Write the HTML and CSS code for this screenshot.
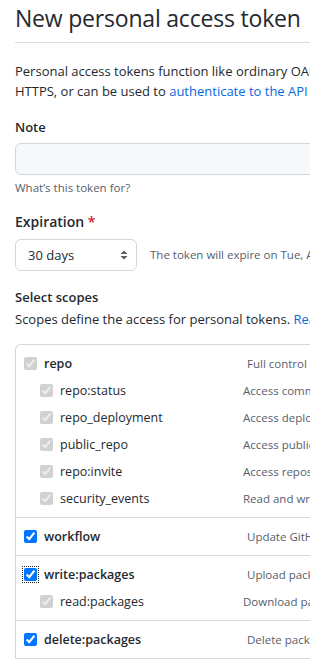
FILE: index.html
```html
<!DOCTYPE html>
<html lang="en">
<head>
  <meta charset="UTF-8" />
  <meta name="viewport" content="width=device-width, initial-scale=1.0" />
  <title>New personal access token</title>
  <link rel="stylesheet" href="styles.css">
</head>
<body>
  <div class="page">
    <h2 class="subhead">New personal access token</h2>

    <p class="intro">
      Personal access tokens function like ordinary OAuth access tokens. They can be used instead of a password for Git over<br>
      HTTPS, or can be used to <a href="#">authenticate to the API over Basic Authentication</a>.
    </p>

    <!-- Note -->
    <div class="form-group">
      <label class="form-label" for="note">Note</label>
      <input class="form-control" type="text" id="note">
      <div class="hint">What’s this token for?</div>
    </div>

    <!-- Expiration -->
    <div class="form-group">
      <label class="form-label form-label-lg" for="expiry">Expiration <span class="required">*</span></label>
      <div class="expiry-row">
        <div class="select-wrap">
          <select class="select" id="expiry">
            <option>30 days</option>
            <option>60 days</option>
            <option>90 days</option>
            <option>Custom...</option>
          </select>
          <svg class="select-arrow" width="8" height="10" viewBox="0 0 8 10">
            <path d="M4 0.5 L7.5 4 H0.5 Z M4 9.5 L7.5 6 H0.5 Z" fill="#57606a"/>
          </svg>
        </div>
        <span class="expiry-note">The token will expire on Tue, Aug 2 2022</span>
      </div>
    </div>

    <!-- Scopes -->
    <div class="form-group">
      <div class="form-label">Select scopes</div>
      <p class="scopes-intro">Scopes define the access for personal tokens. <a href="#">Read more about OAuth scopes.</a></p>
    </div>

    <div class="scopes">
      <div class="scope-group">
        <div class="scope">
          <input type="checkbox" checked disabled>
          <span class="scope-name">repo</span>
          <span class="scope-desc">Full control of private repositories</span>
        </div>
        <div class="scope sub">
          <input type="checkbox" checked disabled>
          <span class="scope-name">repo:status</span>
          <span class="scope-desc">Access commit status</span>
        </div>
        <div class="scope sub">
          <input type="checkbox" checked disabled>
          <span class="scope-name">repo_deployment</span>
          <span class="scope-desc">Access deployment status</span>
        </div>
        <div class="scope sub">
          <input type="checkbox" checked disabled>
          <span class="scope-name">public_repo</span>
          <span class="scope-desc">Access public repositories</span>
        </div>
        <div class="scope sub">
          <input type="checkbox" checked disabled>
          <span class="scope-name">repo:invite</span>
          <span class="scope-desc">Access repository invitations</span>
        </div>
        <div class="scope sub">
          <input type="checkbox" checked disabled>
          <span class="scope-name">security_events</span>
          <span class="scope-desc">Read and write security events</span>
        </div>
      </div>

      <div class="scope-group">
        <div class="scope">
          <input type="checkbox" checked>
          <span class="scope-name">workflow</span>
          <span class="scope-desc">Update GitHub Action workflows</span>
        </div>
      </div>

      <div class="scope-group">
        <div class="scope">
          <input type="checkbox" class="focused" checked>
          <span class="scope-name">write:packages</span>
          <span class="scope-desc">Upload packages to GitHub Package Registry</span>
        </div>
        <div class="scope sub">
          <input type="checkbox" checked disabled>
          <span class="scope-name">read:packages</span>
          <span class="scope-desc">Download packages from GitHub Package Registry</span>
        </div>
      </div>

      <div class="scope-group">
        <div class="scope">
          <input type="checkbox" checked>
          <span class="scope-name">delete:packages</span>
          <span class="scope-desc">Delete packages from GitHub Package Registry</span>
        </div>
      </div>
    </div>
  </div>
</body>
</html>
```

FILE: styles.css
```css
/* Base */
:root {
  --fg: #24292f;
  --fg-muted: #57606a;
  --link: #0969da;
  --border: #d0d7de;
  --border-muted: #d8dee4;
  --input-bg: #f6f8fa;
  --danger: #cf222e;
}
html, body {
  overflow: hidden;
}
body {
  margin: 0;
  font-family: "Open Sans", "Noto Sans", sans-serif;
  font-size: 13px;
  line-height: 20px;
  color: var(--fg);
  background: #fff;
}
a {
  color: var(--link);
  text-decoration: none;
}
.page {
  width: 820px;
  padding: 3px 15px 0;
}

/* Heading */
.subhead {
  margin: 0;
  padding-bottom: 9px;
  border-bottom: 1px solid var(--border-muted);
  font-size: 23px;
  line-height: 30px;
  font-weight: 400;
  letter-spacing: -0.2px;
}
.intro {
  margin: 18px 0 0;
  white-space: nowrap;
}

/* Form */
.form-group {
  margin-top: 16px;
}
.form-label {
  display: block;
  font-weight: 600;
}
.form-label-lg {
  font-size: 14px;
  line-height: 24px;
}
.required {
  color: var(--danger);
}
.form-control {
  display: block;
  box-sizing: border-box;
  width: 440px;
  height: 32px;
  margin-top: 6px;
  padding: 5px 12px;
  font: inherit;
  background: var(--input-bg);
  border: 1px solid var(--border);
  border-radius: 6px;
}
.hint {
  margin-top: 4px;
  font-size: 11.5px;
  line-height: 18px;
  color: var(--fg-muted);
}
.form-group + .form-group {
  margin-top: 13px;
}
.expiry-row {
  display: flex;
  align-items: center;
  gap: 13px;
  margin-top: 5px;
}
.select-wrap {
  position: relative;
  width: 122px;
  height: 32px;
}
.select {
  appearance: none;
  box-sizing: border-box;
  width: 100%;
  height: 100%;
  padding: 0 24px 0 12px;
  font: inherit;
  color: var(--fg);
  background: #fff;
  border: 1px solid var(--border);
  border-radius: 6px;
}
.select-arrow {
  position: absolute;
  top: 11px;
  right: 9px;
}
.expiry-note {
  font-size: 11.5px;
  color: var(--fg-muted);
  white-space: nowrap;
}
.form-group:nth-of-type(3) {
  margin-top: 16px;
}
.scopes-intro {
  margin: 2px 0 0;
  white-space: nowrap;
}

/* Scope list */
.scopes {
  margin-top: 15px;
  border: 1px solid var(--border);
  border-bottom: 0;
  border-radius: 6px 6px 0 0;
}
.scope-group {
  padding: 5px 0;
  border-bottom: 1px solid var(--border);
}
.scope {
  display: flex;
  align-items: center;
  height: 27px;
  padding-left: 8px;
  white-space: nowrap;
}
.scope input {
  width: 13px;
  height: 13px;
  margin: 0 7px 0 0;
  flex: none;
}
.scope-name {
  width: 203px;
  flex: none;
  font-size: 12.5px;
  font-weight: 600;
}
.scope-desc {
  font-size: 11.5px;
  color: var(--fg-muted);
}
.scope.sub {
  padding-left: 24px;
}
.scope.sub .scope-name {
  width: 183px;
  font-weight: 400;
}
.focused {
  outline: 1px dotted #212121;
  outline-offset: 1px;
}
```
